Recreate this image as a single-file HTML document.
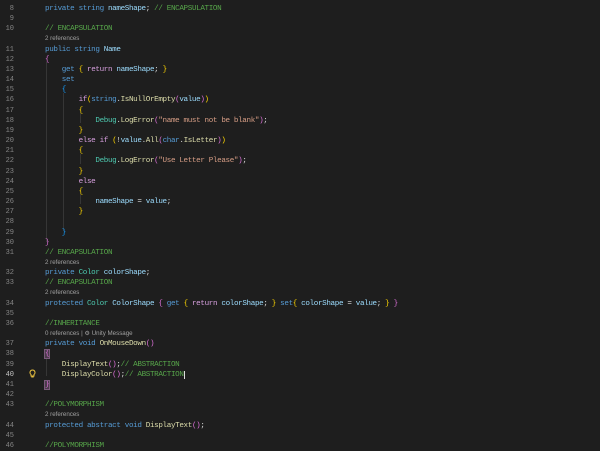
<!DOCTYPE html>
<html><head><style>
body{margin:0;width:600px;height:450px;background:#1e1e1e;overflow:hidden;position:relative;font-family:"Liberation Mono",monospace;}
.r{position:absolute;left:0;height:10.16px;line-height:10.16px;width:600px;white-space:pre;font-size:7.6px;letter-spacing:-0.36px;color:#dcdcdc;}
.n{position:absolute;left:0;width:14px;text-align:right;color:#858585;font-size:7px;letter-spacing:0;}
.c{position:absolute;left:45px;}
.ref{position:absolute;left:45px;font-family:"Liberation Sans",sans-serif;font-size:6.2px;letter-spacing:0;color:#a0a0a0;}
.k{color:#569cd6}.t{color:#4ec9b0}.m{color:#dcdcaa}.cm{color:#57a64a}.v{color:#9cdcfe}.s{color:#d69d85}.f{color:#d8a0df}
.p{color:#da70d6}.g{color:#ffd700}.b{color:#179fff}
.guide{position:absolute;width:1px;background:#363636;}
</style></head><body>
<div class="guide" style="left:46px;top:62px;height:180px"></div>
<div class="guide" style="left:63px;top:93px;height:138px"></div>
<div class="guide" style="left:80px;top:113px;height:10px"></div>
<div class="guide" style="left:80px;top:154px;height:10px"></div>
<div class="guide" style="left:80px;top:194px;height:10px"></div>
<div class="guide" style="left:46px;top:356px;height:20px"></div>
<svg style="position:absolute;left:29px;top:369px" width="7" height="10" viewBox="0 0 7 10"><path d="M3.5 1a2.5 2.5 0 0 0-1.5 4.5v1.5h3V5.5A2.5 2.5 0 0 0 3.5 1zM2.3 8h2.4" fill="none" stroke="#e8c040" stroke-width="1"/></svg>

<div class="r" style="top:-6.16px"><span class="ref">2 references</span></div>
<div class="r" style="top:4px"><span class="n">8</span><span class="c"><span class="k">private</span> <span class="k">string</span> <span class="v">nameShape</span>; <span class="cm">// ENCAPSULATION</span></span></div>
<div class="r" style="top:14.16px"><span class="n">9</span></div>
<div class="r" style="top:24.32px"><span class="n">10</span><span class="c"><span class="cm">// ENCAPSULATION</span></span></div>
<div class="r" style="top:34.48px"><span class="ref">2 references</span></div>
<div class="r" style="top:44.64px"><span class="n">11</span><span class="c"><span class="k">public</span> <span class="k">string</span> <span class="v">Name</span></span></div>
<div class="r" style="top:54.8px"><span class="n">12</span><span class="c"><span class="p">{</span></span></div>
<div class="r" style="top:64.96px"><span class="n">13</span><span class="c">    <span class="k">get</span> <span class="g">{</span> <span class="f">return</span> <span class="v">nameShape</span>; <span class="g">}</span></span></div>
<div class="r" style="top:75.12px"><span class="n">14</span><span class="c">    <span class="k">set</span></span></div>
<div class="r" style="top:85.28px"><span class="n">15</span><span class="c">    <span class="b">{</span></span></div>
<div class="r" style="top:95.44px"><span class="n">16</span><span class="c">        <span class="f">if</span><span class="g">(</span><span class="k">string</span>.<span class="m">IsNullOrEmpty</span><span class="p">(</span><span class="v">value</span><span class="p">)</span><span class="g">)</span></span></div>
<div class="r" style="top:105.6px"><span class="n">17</span><span class="c">        <span class="g">{</span></span></div>
<div class="r" style="top:115.76px"><span class="n">18</span><span class="c">            <span class="t">Debug</span>.<span class="m">LogError</span><span class="p">(</span><span class="s">"name must not be blank"</span><span class="p">)</span>;</span></div>
<div class="r" style="top:125.92px"><span class="n">19</span><span class="c">        <span class="g">}</span></span></div>
<div class="r" style="top:136.08px"><span class="n">20</span><span class="c">        <span class="f">else</span> <span class="f">if</span> <span class="g">(</span>!<span class="v">value</span>.<span class="m">All</span><span class="p">(</span><span class="k">char</span>.<span class="m">IsLetter</span><span class="p">)</span><span class="g">)</span></span></div>
<div class="r" style="top:146.24px"><span class="n">21</span><span class="c">        <span class="g">{</span></span></div>
<div class="r" style="top:156.4px"><span class="n">22</span><span class="c">            <span class="t">Debug</span>.<span class="m">LogError</span><span class="p">(</span><span class="s">"Use Letter Please"</span><span class="p">)</span>;</span></div>
<div class="r" style="top:166.56px"><span class="n">23</span><span class="c">        <span class="g">}</span></span></div>
<div class="r" style="top:176.72px"><span class="n">24</span><span class="c">        <span class="f">else</span></span></div>
<div class="r" style="top:186.88px"><span class="n">25</span><span class="c">        <span class="g">{</span></span></div>
<div class="r" style="top:197.04px"><span class="n">26</span><span class="c">            <span class="v">nameShape</span> = <span class="v">value</span>;</span></div>
<div class="r" style="top:207.2px"><span class="n">27</span><span class="c">        <span class="g">}</span></span></div>
<div class="r" style="top:217.36px"><span class="n">28</span></div>
<div class="r" style="top:227.52px"><span class="n">29</span><span class="c">    <span class="b">}</span></span></div>
<div class="r" style="top:237.68px"><span class="n">30</span><span class="c"><span class="p">}</span></span></div>
<div class="r" style="top:247.84px"><span class="n">31</span><span class="c"><span class="cm">// ENCAPSULATION</span></span></div>
<div class="r" style="top:258px"><span class="ref">2 references</span></div>
<div class="r" style="top:268.16px"><span class="n">32</span><span class="c"><span class="k">private</span> <span class="t">Color</span> <span class="v">colorShape</span>;</span></div>
<div class="r" style="top:278.32px"><span class="n">33</span><span class="c"><span class="cm">// ENCAPSULATION</span></span></div>
<div class="r" style="top:288.48px"><span class="ref">2 references</span></div>
<div class="r" style="top:298.64px"><span class="n">34</span><span class="c"><span class="k">protected</span> <span class="t">Color</span> <span class="v">ColorShape</span> <span class="p">{</span> <span class="k">get</span> <span class="g">{</span> <span class="f">return</span> <span class="v">colorShape</span>; <span class="g">}</span> <span class="k">set</span><span class="g">{</span> <span class="v">colorShape</span> = <span class="v">value</span>; <span class="g">}</span> <span class="p">}</span></span></div>
<div class="r" style="top:308.8px"><span class="n">35</span></div>
<div class="r" style="top:318.96px"><span class="n">36</span><span class="c"><span class="cm">//INHERITANCE</span></span></div>
<div class="r" style="top:329.12px"><span class="ref">0 references | ⚙ Unity Message</span></div>
<div class="r" style="top:339.28px"><span class="n">37</span><span class="c"><span class="k">private</span> <span class="k">void</span> <span class="m">OnMouseDown</span><span class="p">()</span></span></div>
<div class="r" style="top:349.44px"><span class="n">38</span><span class="c"><span class="p" style="background:#4a3a4a;outline:1px solid #7a5a7a">{</span></span></div>
<div class="r" style="top:359.6px"><span class="n">39</span><span class="c">    <span class="m">DisplayText</span><span class="p">()</span>;<span class="cm">// ABSTRACTION</span></span></div>
<div class="r" style="top:369.76px"><span class="n" style="color:#c6c6c6">40</span><span class="c">    <span class="m">DisplayColor</span><span class="p">()</span>;<span class="cm">// ABSTRACTION</span><span style="border-left:1px solid #ddd"></span></span></div>
<div class="r" style="top:379.92px"><span class="n">41</span><span class="c"><span class="p" style="background:#4a3a4a;outline:1px solid #7a5a7a">}</span></span></div>
<div class="r" style="top:390.08px"><span class="n">42</span></div>
<div class="r" style="top:400.24px"><span class="n">43</span><span class="c"><span class="cm">//POLYMORPHISM</span></span></div>
<div class="r" style="top:410.4px"><span class="ref">2 references</span></div>
<div class="r" style="top:420.56px"><span class="n">44</span><span class="c"><span class="k">protected</span> <span class="k">abstract</span> <span class="k">void</span> <span class="m">DisplayText</span><span class="p">()</span>;</span></div>
<div class="r" style="top:430.72px"><span class="n">45</span></div>
<div class="r" style="top:440.88px"><span class="n">46</span><span class="c"><span class="cm">//POLYMORPHISM</span></span></div>
</body></html>
